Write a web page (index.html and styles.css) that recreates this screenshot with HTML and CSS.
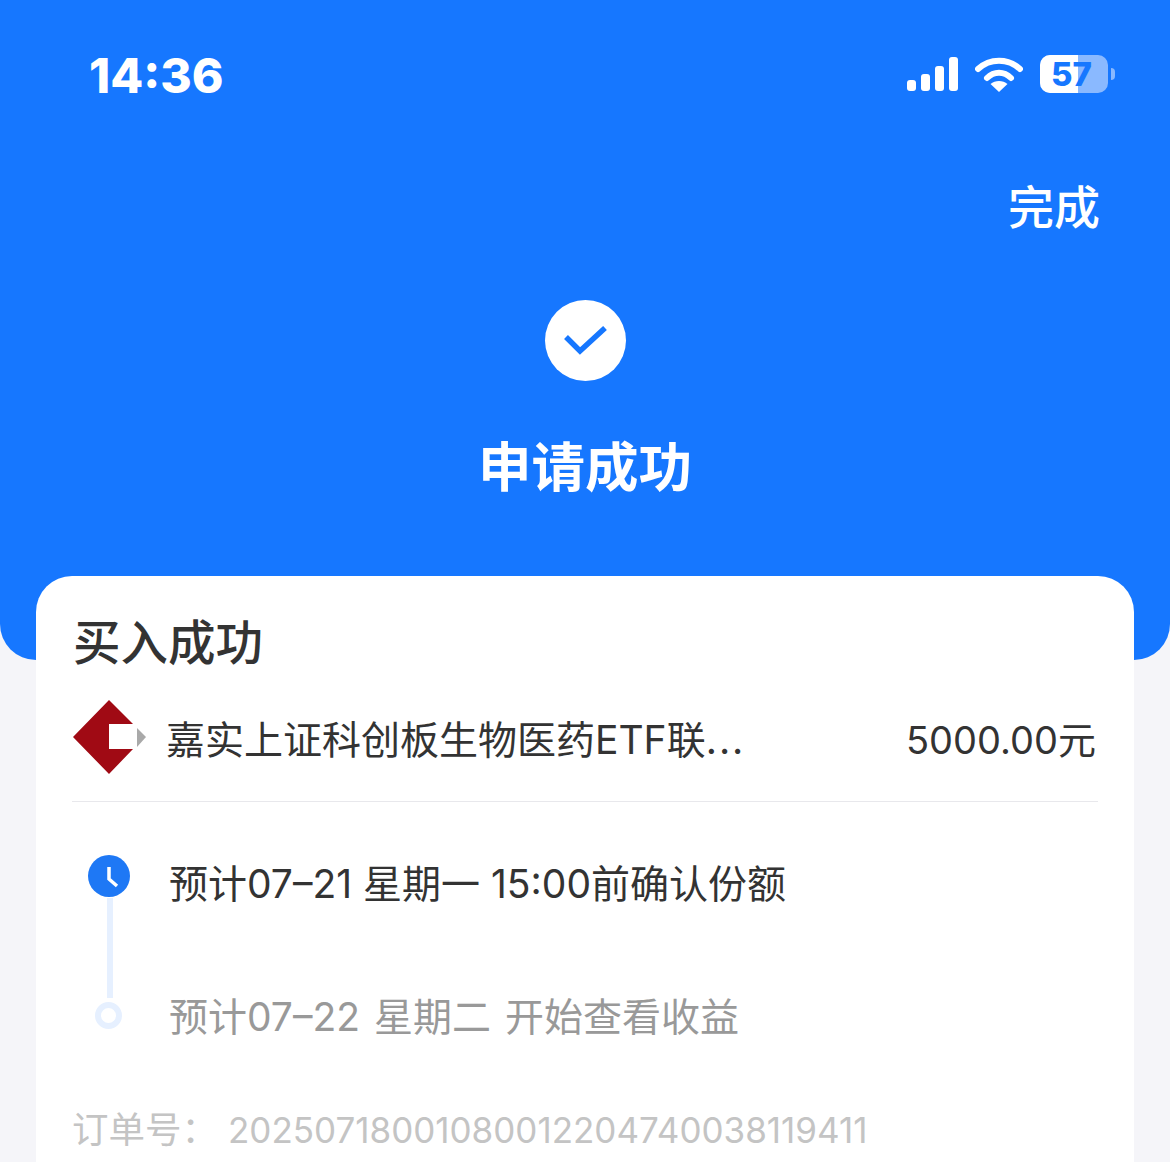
FILE: index.html
```html
<!DOCTYPE html>
<html lang="zh-CN">
<head>
    <meta charset="UTF-8">
    <title>申请成功</title>
    <link rel="stylesheet" href="styles.css">
</head>
<body>
    <div class="page">
        <div class="top">
            <div class="status">
                <span class="time">14:36</span>
                <div class="status-icons">
                    <svg class="signal" width="51" height="34" viewBox="0 0 51 34">
                        <rect x="0" y="23" width="9" height="11" rx="3" fill="#fff"/>
                        <rect x="14" y="17" width="9" height="17" rx="3" fill="#fff"/>
                        <rect x="28" y="9" width="9" height="25" rx="3" fill="#fff"/>
                        <rect x="42" y="0" width="9" height="34" rx="3" fill="#fff"/>
                    </svg>
                    <svg class="wifi" width="48" height="36" viewBox="0 0 48 36">
                        <path d="M3 13 C15 2 33 2 45 13" fill="none" stroke="#fff" stroke-width="6" stroke-linecap="round"/>
                        <path d="M12 22 C19 15 29 15 36 22" fill="none" stroke="#fff" stroke-width="6" stroke-linecap="round"/>
                        <path d="M24 36 L15.5 28 C20 24 28 24 32.5 28 Z" fill="#fff"/>
                    </svg>
                    <div class="battery">
                        <div class="battery-fill"></div>
                        <span class="battery-num">57</span>
                    </div>
                    <div class="battery-nub"></div>
                </div>
            </div>
            <div class="done-row"><span class="done">完成</span></div>
            <div class="ok-icon">
                <svg width="44" height="30" viewBox="0 0 44 30">
                    <path d="M2 11 L16 25 L41 2" fill="none" stroke="#1677ff" stroke-width="5.5"/>
                </svg>
            </div>
            <div class="top-title">申请成功</div>
        </div>

        <div class="card">
            <div class="card-title">买入成功</div>
            <div class="fund-row">
                <svg class="fund-logo" width="76" height="76" viewBox="0 0 76 76">
                    <path d="M36 0 L60 24 L36 24 L36 49 L60 49 L36 74 L0 37 Z" fill="#a00a14"/>
                    <path d="M64 28 L73 37 L64 47 Z" fill="#a9a9a9"/>
                </svg>
                <span class="fund-name">嘉实上证科创板生物医药ETF联<span class="dots">...</span></span>
                <span class="fund-money">5000.00元</span>
            </div>
            <div class="steps">
                <div class="step">
                    <div class="step-mark">
                        <svg class="clock" width="42" height="42" viewBox="0 0 42 42">
                            <circle cx="21" cy="21" r="21" fill="#1e78f5"/>
                            <path d="M21 12 L21 24 L29 31" fill="none" stroke="#fff" stroke-width="3.5"/>
                        </svg>
                        <div class="step-line"></div>
                    </div>
                    <div class="step-text">预计07–21 星期一 15:00前确认份额</div>
                </div>
                <div class="step step-next">
                    <div class="step-mark">
                        <div class="step-dot"></div>
                    </div>
                    <div class="step-text">预计07–22 星期二 开始查看收益</div>
                </div>
            </div>
            <div class="order">
                <span class="order-label">订单号：</span>
                <span class="order-no">20250718001080012204740038119411</span>
            </div>
        </div>
    </div>
</body>
</html>
```

FILE: styles.css
```css
* {
    margin: 0;
    padding: 0;
    box-sizing: border-box;
}
html, body {
    height: 100%;
    overflow: hidden;
}
body {
    background-color: #f5f5f9;
    font-family: "Inter", "Noto Sans CJK SC", sans-serif;
}
.page {
    height: 1162px;
    overflow: hidden;
}

/* blue header */
.top {
    height: 660px;
    background-color: #1677ff;
    border-radius: 0 0 36px 36px;
    color: #fff;
    padding-top: 51px;
}
.status {
    display: flex;
    justify-content: space-between;
    align-items: center;
    height: 48px;
    padding: 0 55px 0 89px;
}
.time {
    font-size: 48px;
    font-weight: 800;
    line-height: 48px;
    padding-top: 1px;
}
.status-icons {
    display: flex;
    align-items: center;
    margin-top: -2px;
}
.signal {
    margin-right: 17px;
}
.wifi {
    margin-right: 17px;
}
.battery {
    position: relative;
    width: 68px;
    height: 38px;
    border-radius: 10px;
    background-color: #8ab9ff;
    overflow: hidden;
}
.battery-fill {
    width: 38px;
    height: 38px;
    background-color: #fff;
}
.battery-num {
    position: absolute;
    left: 11px;
    top: 0;
    line-height: 38px;
    font-size: 33px;
    font-weight: 800;
    color: #1677ff;
}
.battery-nub {
    width: 4px;
    height: 12px;
    margin-left: 3px;
    border-radius: 0 6px 6px 0;
    background-color: #8ab9ff;
}
.done-row {
    display: flex;
    justify-content: flex-end;
    padding: 78px 70px 0 0;
}
.done {
    font-size: 46px;
    font-weight: 500;
    line-height: 60px;
}
.ok-icon {
    width: 81px;
    height: 81px;
    margin: 63px auto 0;
    padding-left: 2px;
    border-radius: 50%;
    background-color: #fff;
    display: flex;
    align-items: center;
    justify-content: center;
}
.top-title {
    margin-top: 50px;
    text-align: center;
    font-size: 53.5px;
    font-weight: 700;
    line-height: 74px;
}

/* card */
.card {
    margin: -84px 36px 0;
    height: 620px;
    background-color: #fff;
    border-radius: 36px 36px 0 0;
    padding: 34px 36px 0;
    position: relative;
}
.card-title {
    font-size: 47.5px;
    font-weight: 500;
    line-height: 66px;
    color: #333;
    padding-left: 1px;
}
.fund-row {
    display: flex;
    align-items: center;
    height: 116px;
    margin-top: 10px;
    padding: 0 2px 7px 0;
    border-bottom: 1px solid #e8e8ec;
}
.fund-logo {
    flex: none;
    margin: 0 17px 5px 1px;
}
.fund-name {
    flex: 1;
    font-size: 39px;
    line-height: 54px;
    color: #333;
}
.dots {
    letter-spacing: 2px;
}
.fund-money {
    font-size: 38px;
    line-height: 54px;
    color: #333;
}

/* steps */
.steps {
    padding-top: 47px;
}
.step {
    display: flex;
    height: 133px;
}
.step-next {
    height: 123px;
}
.step-mark {
    width: 97px;
    flex: none;
    padding: 6px 0 0 16px;
}
.clock {
    display: block;
}
.step-line {
    width: 6px;
    height: 100px;
    margin: 1px 0 0 19px;
    background-color: #e6f0ff;
}
.step-dot {
    width: 27px;
    height: 27px;
    margin: 14px 0 0 7px;
    border: 6px solid #e6f0ff;
    border-radius: 50%;
}
.step-text {
    margin-top: 8px;
    font-size: 39px;
    line-height: 54px;
    color: #333;
}
.step-next .step-text {
    word-spacing: 3px;
    color: #999;
}
.order {
    display: flex;
    align-items: baseline;
    font-size: 36.5px;
    line-height: 50px;
    color: #c4c4c4;
}
.order-label {
    width: 156px;
}
.order-no {
    font-size: 35px;
}
```
